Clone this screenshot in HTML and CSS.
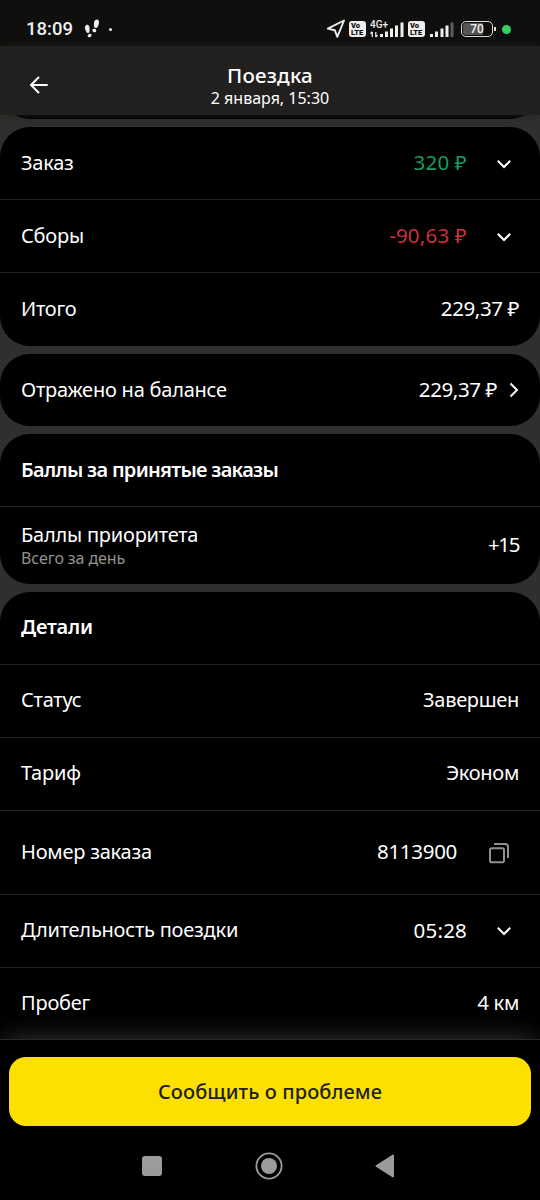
FILE: index.html
```
<!DOCTYPE html>
<html lang="ru">

<head>
    <meta charset="UTF-8">
    <meta name="viewport" content="width=device-width, initial-scale=1.0">
    <title>Поездка</title>
    <link rel="stylesheet" href="styles.css">
</head>

<body>
    <div class="statusbar">
        <span class="time">18:09</span>
        <svg class="steps" width="16" height="20" viewBox="0 0 16 20">
            <path d="M2.200 6.200C4.500 4.800 6 8 5.600 10.500 5.400 12.500 5.800 13.500 4.300 14 2.400 14.300 2.200 12.500 1.500 11 .5 9 .6 7 2.200 6.200Z" />
            <ellipse cx="5.600" cy="16.600" rx="2" ry="1.700" transform="rotate(-15 5.600 16.600)" />
            <path d="M13 .6C15.500 1 15.300 4.500 14.300 6.500 13.500 8 13.400 9.300 11.700 9 9.800 8.700 10 7.200 9.900 5.500 9.700 3 10.800.4 13 .6Z" />
            <ellipse cx="10.300" cy="11.500" rx="2" ry="1.700" transform="rotate(15 10.300 11.500)" />
        </svg>
        <span class="dot"></span>
        <div class="indicators">
            <svg width="20" height="20" viewBox="0 0 20 20">
                <path d="M18 1.500 11.300 17.800 8.800 11.200 1.800 9.600Z" fill="none" stroke="#eee" stroke-width="1.900" stroke-linejoin="round" />
            </svg>
            <span class="volte"><b>Vo</b><b>LTE</b></span>
            <div class="network">
                <span class="network-type">4G+</span>
                <svg width="34" height="19" viewBox="0 0 34 19">
                    <path d="M2.300 17V12M.5 13.700 2.300 11.800M5.800 12v5M5.800 17l1.800-1.900" fill="none" stroke="#eee" stroke-width="1.300" />
                    <path d="M10 14h3v3h-3zM15 11.500h3V17h-3zM20 8.500h3V17h-3zM25 5.500h3V17h-3zM30.500 2.500h3V17h-3z" />
                </svg>
            </div>
            <span class="volte"><b>Vo</b><b>LTE</b></span>
            <svg class="signal" width="24" height="19" viewBox="0 0 24 19">
                <path d="M0 14h3v3H0zM5 11.500h3V17H5zM10.500 8.500h3V17h-3zM15.500 5.500h3V17h-3z" />
                <path d="M20.500 2.500h3V17h-3z" opacity=".35" />
            </svg>
            <div class="battery">70</div>
            <span class="privacy"></span>
        </div>
    </div>

    <header class="header">
        <svg class="back" width="20" height="20" viewBox="0 0 20 20">
            <path d="M18.700 10H2.200M10 2 2 10l8 8" />
        </svg>
        <div class="header-title">Поездка</div>
        <div class="header-date">2 января, 15:30</div>
    </header>

    <main class="content">
        <section class="card card-prev"></section>

        <section class="card card-money">
            <div class="row">
                <span class="label">Заказ</span>
                <span class="value wide green">320 ₽</span>
                <svg class="chevron" width="16" height="10" viewBox="0 0 16 10"><path d="M1.800 1.800 8 8l6.200-6.200" /></svg>
            </div>
            <div class="row">
                <span class="label">Сборы</span>
                <span class="value wide red">-90,63 ₽</span>
                <svg class="chevron" width="16" height="10" viewBox="0 0 16 10"><path d="M1.800 1.800 8 8l6.200-6.200" /></svg>
            </div>
            <div class="row">
                <span class="label">Итого</span>
                <span class="value">229,37 ₽</span>
            </div>
        </section>

        <section class="card">
            <div class="row">
                <span class="label">Отражено на балансе</span>
                <span class="value">229,37 ₽</span>
                <svg class="arrow" width="10" height="16" viewBox="0 0 10 16"><path d="M1.500 1.500 8 8l-6.500 6.500" /></svg>
            </div>
        </section>

        <section class="card">
            <div class="row">
                <span class="label title title-points">Баллы за принятые заказы</span>
            </div>
            <div class="row row-points">
                <div class="label">
                    Баллы приоритета
                    <div class="hint">Всего за день</div>
                </div>
                <span class="value points">+15</span>
            </div>
        </section>

        <section class="card card-details">
            <div class="row">
                <span class="label title">Детали</span>
            </div>
            <div class="row">
                <span class="label">Статус</span>
                <span class="value word">Завершен</span>
            </div>
            <div class="row">
                <span class="label">Тариф</span>
                <span class="value word">Эконом</span>
            </div>
            <div class="row row-order">
                <span class="label">Номер заказа</span>
                <span class="value number">8113900</span>
                <svg class="copy" width="22" height="22" viewBox="0 0 22 22">
                    <rect x="2" y="6.200" width="14" height="14" rx="1.800" />
                    <path d="M6 2H17q3 0 3 3v11" />
                </svg>
            </div>
            <div class="row">
                <span class="label">Длительность поездки</span>
                <span class="value wide">05:28</span>
                <svg class="chevron" width="16" height="10" viewBox="0 0 16 10"><path d="M1.800 1.800 8 8l6.200-6.200" /></svg>
            </div>
            <div class="row">
                <span class="label">Пробег</span>
                <span class="value word">4 км</span>
            </div>
        </section>
    </main>

    <footer class="footer">
        <button class="report">Сообщить о проблеме</button>
        <div class="navbar">
            <svg width="20" height="20" viewBox="0 0 20 20"><rect width="20" height="20" rx="3" /></svg>
            <svg width="28" height="28" viewBox="0 0 28 28">
                <circle cx="14" cy="14" r="12.600" fill="none" stroke="#9b9b9b" stroke-width="1.800" />
                <circle cx="14" cy="14" r="8" />
            </svg>
            <svg width="20" height="24" viewBox="0 0 20 24"><path d="M18 1.500v21L1.500 12Z" stroke="#9b9b9b" stroke-width="2" stroke-linejoin="round" /></svg>
        </div>
    </footer>
</body>

</html>
```
FILE: styles.css
```
* {
    box-sizing: border-box;
}

body {
    margin: 0;
    width: 540px;
    height: 1200px;
    overflow: hidden;
    display: flex;
    flex-direction: column;
    background: #302f2d;
    color: #fff;
    font-family: "Noto Sans", sans-serif;
    font-size: 20px;
}

svg {
    display: block;
    flex-shrink: 0;
}

/* phone status bar */
.statusbar {
    height: 46px;
    flex-shrink: 0;
    padding: 12px 29px 0 26px;
    display: flex;
    align-items: center;
    background: #0f0f0d;
    color: #eee;
    fill: #eee;
}

.time {
    font-family: Roboto, sans-serif;
    font-size: 18.5px;
    font-weight: 500;
}

.steps {
    margin-left: 11px;
}

.dot {
    width: 3px;
    height: 3px;
    margin-left: 9px;
    border-radius: 50%;
    background: #eee;
}

.indicators {
    display: flex;
    align-items: center;
    margin-left: auto;
}

.volte {
    width: 17px;
    height: 16px;
    margin-left: 3px;
    padding: 1px 2px;
    border-radius: 3px;
    background: #eee;
    color: #0f0f0d;
    font-family: Roboto, sans-serif;
    font-size: 7.5px;
    line-height: 7px;
}

.volte b {
    display: block;
    font-weight: 900;
}

.network {
    position: relative;
    margin-left: 4px;
}

.network-type {
    position: absolute;
    top: 0;
    left: 0;
    font-family: Roboto, sans-serif;
    font-size: 10px;
    font-weight: 500;
    line-height: 9px;
}

.network + .volte {
    margin-left: 4px;
}

.signal {
    margin-left: 5px;
}

.battery {
    position: relative;
    width: 32px;
    height: 16px;
    margin-left: 7px;
    border: 1.5px solid #ddd;
    border-radius: 5px;
    background: linear-gradient(90deg, #555 70%, transparent 70%) content-box;
    padding: 1px;
    font: 500 12px/12px Roboto, sans-serif;
    text-align: center;
}

.battery::after {
    content: "";
    position: absolute;
    top: 5px;
    right: -4px;
    width: 2px;
    height: 4px;
    background: #ddd;
}

.privacy {
    width: 9px;
    height: 9px;
    margin-left: 9px;
    border-radius: 50%;
    background: #36d166;
}

.header {
    position: relative;
    height: 69px;
    flex-shrink: 0;
    padding-top: 17px;
    background: #21201f;
    box-shadow: 0 0 8px rgba(33, 32, 31, 0.8);
    text-align: center;
    z-index: 1;
}

.back {
    position: absolute;
    left: 29px;
    top: 29px;
    fill: none;
    stroke: #fff;
    stroke-width: 2;
}

.header-title {
    font-size: 20.5px;
    font-weight: 500;
    letter-spacing: 0.2px;
    line-height: 24px;
}

.header-date {
    font-size: 16px;
    line-height: 22px;
}

.content {
    flex: 1;
    min-height: 0;
    overflow: hidden;
    display: flex;
    flex-direction: column;
    gap: 8px;
}

.card {
    flex-shrink: 0;
    background: #000;
    border-radius: 30px;
    overflow: hidden;
}

.card-prev {
    height: 60px;
    margin-top: -56px;
}

.card-details {
    border-radius: 30px 30px 0 0;
}

.row {
    height: 73px;
    padding: 0 21px 1px;
    display: flex;
    align-items: center;
}

.row:first-child {
    height: 72px;
}

.row + .row {
    border-top: 1px solid #242424;
}

.card-money .row:last-child {
    height: 74px;
    padding-bottom: 2px;
}

.card-details .row {
    padding-bottom: 2px;
}

.row-points.row {
    height: 78px;
    padding-bottom: 2px;
}

.row-order {
    height: 84px;
}

.label {
    flex: 1;
    line-height: 26px;
    letter-spacing: -0.22px;
}

.title {
    font-weight: 600;
}

.title-points {
    letter-spacing: -0.7px;
}

.hint {
    color: #93918d;
    font-size: 16px;
    line-height: 20px;
    letter-spacing: -0.1px;
}

.value {
    padding-bottom: 1px;
    line-height: 26px;
    font-size: 20.5px;
    letter-spacing: -0.4px;
}

.wide {
    letter-spacing: 0.2px;
}

.number {
    letter-spacing: -0.3px;
    margin-right: 1px;
}

.word {
    font-size: 20px;
    letter-spacing: -0.3px;
}

.points {
    letter-spacing: -1.4px;
}

.green {
    color: #1c9a5e;
}

.red {
    color: #c8333b;
}

.chevron,
.arrow {
    fill: none;
    stroke: #fff;
    stroke-width: 2;
}

.chevron {
    margin: 2px 7px 0 29px;
}

.arrow {
    margin: 1px 0 0 12px;
}

.copy {
    margin: 2px 9px 0 30px;
    fill: none;
    stroke: #92908d;
    stroke-width: 2;
}

.footer {
    position: relative;
    height: 161px;
    flex-shrink: 0;
    padding: 17px 9px 0;
    border-top: 1px solid #292826;
    background: #000;
    box-shadow: 0 -6px 24px -6px #383735;
}

.report {
    display: block;
    width: 100%;
    height: 69px;
    padding: 0 0 1px;
    border: none;
    border-radius: 17px;
    background: #fce000;
    color: #21201f;
    font-family: inherit;
    font-size: 20px;
    font-weight: 500;
    letter-spacing: 0.1px;
}

.navbar {
    height: 79px;
    padding: 0 136px 0 133px;
    display: flex;
    align-items: center;
    justify-content: space-between;
    fill: #9b9b9b;
}
```
